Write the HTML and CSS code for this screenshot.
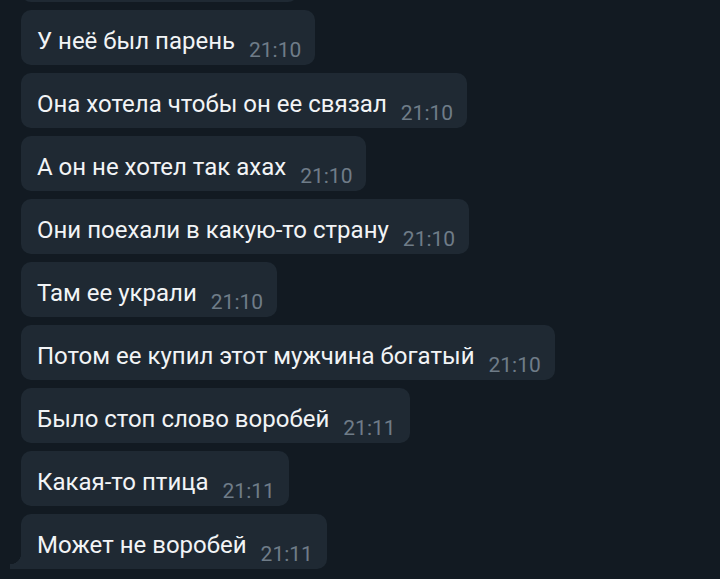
FILE: index.html
```html
<!DOCTYPE html>
<html lang="ru">
<head>
  <meta charset="UTF-8">
  <title>Chat</title>
  <link rel="stylesheet" href="styles.css">
</head>
<body>
  <div class="chat">
    <div class="msg msg-cut"><span class="text">&nbsp;</span></div>
    <div class="msg"><span class="text">У неё был парень</span><span class="time">21:10</span></div>
    <div class="msg"><span class="text">Она хотела чтобы он ее связал</span><span class="time">21:10</span></div>
    <div class="msg"><span class="text">А он не хотел так ахах</span><span class="time">21:10</span></div>
    <div class="msg"><span class="text">Они поехали в какую-то страну</span><span class="time">21:10</span></div>
    <div class="msg"><span class="text">Там ее украли</span><span class="time">21:10</span></div>
    <div class="msg"><span class="text">Потом ее купил этот мужчина богатый</span><span class="time">21:10</span></div>
    <div class="msg"><span class="text">Было стоп слово воробей</span><span class="time">21:11</span></div>
    <div class="msg"><span class="text">Какая-то птица</span><span class="time">21:11</span></div>
    <div class="msg msg-last"><span class="text">Может не воробей</span><span class="time">21:11</span></div>
  </div>
</body>
</html>
```

FILE: styles.css
```css
* {
    margin: 0;
    padding: 0;
    box-sizing: border-box;
}

html, body {
    height: 100%;
}

body {
    background-color: #121a22;
    font-family: Roboto, "Noto Sans", sans-serif;
    overflow: hidden;
}

.chat {
    display: flex;
    flex-direction: column;
    align-items: flex-start;
    gap: 8px;
    padding-left: 21px;
    margin-top: -53px;
}

/* Message bubble */
.msg {
    position: relative;
    display: flex;
    align-items: flex-end;
    gap: 14px;
    height: 55px;
    padding: 0 14px 0 16px;
    background-color: #1f2933;
    border-radius: 10px;
}

.msg-cut {
    width: 277px;
}

.text {
    color: #f2f4f6;
    font-size: 24px;
    line-height: 28px;
    padding-bottom: 10px;
}

.time {
    color: #6f7c88;
    font-size: 21px;
    line-height: 21px;
    padding-bottom: 4px;
}

/* tail of the last bubble */
.msg-last {
    border-bottom-left-radius: 0;
}

.msg-last::before {
    content: "";
    position: absolute;
    left: -11px;
    bottom: 0;
    width: 11px;
    height: 16px;
    background: radial-gradient(circle at 0 0, transparent 11px, #1f2933 11.5px);
}
```
